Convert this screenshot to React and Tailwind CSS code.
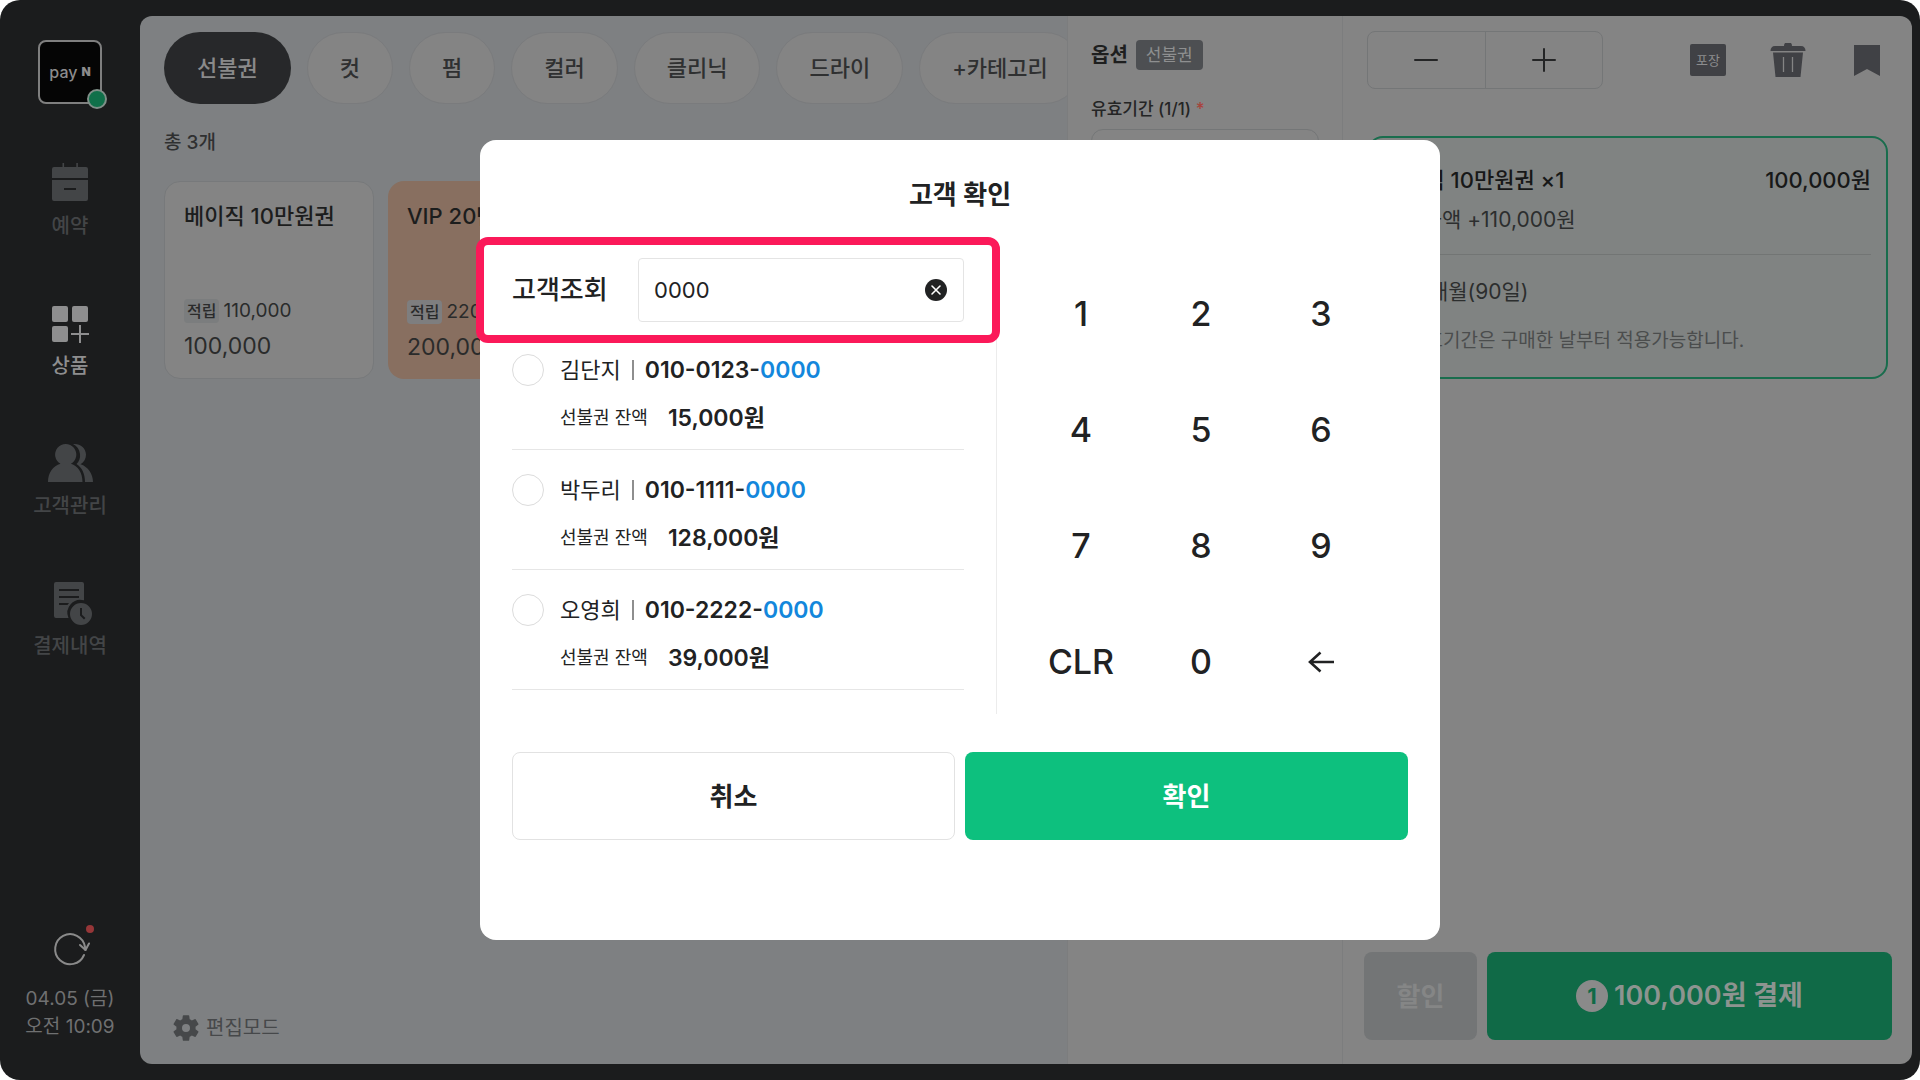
import { useState } from "react";

const CalendarIcon = () => (
  <svg viewBox="0 0 48 48" className="size-12 fill-current" aria-hidden="true">
    <path d="M16.5 4h1.6v4h12.2V4h1.6v4H40a2 2 0 0 1 2 2v9H6v-9a2 2 0 0 1 2-2h8.500z" />
    <path d="M6 21h36v19a2 2 0 0 1-2 2H8a2 2 0 0 1-2-2zM18 29v2h12v-2z" fillRule="evenodd" />
  </svg>
);

const ProductIcon = () => (
  <svg viewBox="0 0 48 48" className="size-12 fill-current" aria-hidden="true">
    <rect x="6" y="7" width="16" height="16" rx="2" />
    <rect x="26" y="7" width="16" height="16" rx="2" />
    <rect x="6" y="27" width="16" height="16" rx="2" />
    <path d="M33 26h2v8h8v2h-8v8h-2v-8h-8v-2h8z" />
  </svg>
);

const CustomersIcon = () => (
  <svg viewBox="0 0 48 48" className="size-12 fill-current" aria-hidden="true">
    <path d="M2 43c0-9 5-16 12.500-18.200a10.600 10.600 0 1 1 10.400 0C32 27 36.500 34 36.500 43z" />
    <path d="M27 5c7-.8 13 4 13 10.500 0 4.200-2 7.700-5.500 9.700C42 27.500 47 35 47 43h-8c0-8-3-14.500-8.500-18 2.700-2.500 4-6 3.500-10-.5-4.500-3-8-7-10z" />
  </svg>
);

const HistoryIcon = () => (
  <svg viewBox="0 0 48 48" className="size-12 fill-current" aria-hidden="true">
    <path
      fillRule="evenodd"
      d="M10 3h26a2 2 0 0 1 2 2v16.300A13 13 0 0 0 22.500 39H10a2 2 0 0 1-2-2V5a2 2 0 0 1 2-2zm3 7v2h20v-2zm0 7v2h20v-2zm0 7v2h8.500l1.500-2z"
    />
    <path fillRule="evenodd" d="M35 24a11 11 0 1 1 0 22 11 11 0 0 1 0-22zm-1 5v7.500l4 4 1.400-1.400-3.400-3.400V29z" />
  </svg>
);

const GearIcon = () => (
  <svg viewBox="0 0 24 24" className="size-8 fill-current" aria-hidden="true">
    <path d="M19.140 12.940c.04-.3.060-.61.060-.94 0-.32-.02-.64-.07-.94l2.030-1.580a.49.49 0 0 0 .12-.61l-1.920-3.320a.488.488 0 0 0-.59-.22l-2.390.96c-.5-.38-1.030-.7-1.620-.94l-.36-2.540a.484.484 0 0 0-.48-.41h-3.840c-.24 0-.43.17-.47.41l-.36 2.540c-.59.24-1.130.57-1.620.94l-2.390-.96c-.22-.08-.47 0-.59.22L2.740 8.870c-.12.21-.08.47.12.61l2.030 1.580c-.05.3-.09.63-.09.94s.02.64.07.94l-2.030 1.580a.49.49 0 0 0-.12.61l1.920 3.320c.12.22.37.29.59.22l2.390-.96c.5.38 1.030.7 1.620.94l.36 2.540c.05.24.24.41.48.41h3.840c.24 0 .44-.17.47-.41l.36-2.540c.59-.24 1.130-.56 1.620-.94l2.390.96c.22.08.47 0 .59-.22l1.920-3.320c.12-.22.07-.47-.12-.61zM12 15a3 3 0 1 1 0-6 3 3 0 0 1 0 6z" />
  </svg>
);

const NAV = [
  { label: "예약", Icon: CalendarIcon },
  { label: "상품", Icon: ProductIcon, active: true },
  { label: "고객관리", Icon: CustomersIcon },
  { label: "결제내역", Icon: HistoryIcon },
];

const CATEGORIES = ["선불권", "컷", "펌", "컬러", "클리닉", "드라이", "+카테고리"];

const PASSES = [
  { name: "베이직 10만원권", bonus: "110,000", price: "100,000" },
  { name: "VIP 20만원권", bonus: "220,000", price: "200,000", vip: true },
];

const CUSTOMERS = [
  { name: "김단지", phone: "010-0123-", balance: "15,000원" },
  { name: "박두리", phone: "010-1111-", balance: "128,000원" },
  { name: "오영희", phone: "010-2222-", balance: "39,000원" },
];

const KEYS = ["1", "2", "3", "4", "5", "6", "7", "8", "9", "CLR", "0", "←"];

function Sidebar() {
  return (
    <aside className="flex w-[140px] shrink-0 flex-col items-center pt-10 pb-[39px]">
      <div className="relative flex size-16 items-center justify-center gap-1 rounded-lg border-2 border-[#7f7f7f] bg-[#050505] text-[#8c8c8c]">
        <span className="text-[16px] leading-6 font-medium">pay</span>
        <span className="text-[12px] leading-6 font-black">N</span>
        <span className="absolute -right-[7px] -bottom-[7px] size-5 rounded-full border-2 border-[#7f8f88] bg-[#10704a]" />
      </div>
      <nav className="mt-[55px] flex flex-col">
        {NAV.map(({ label, Icon, active }) => (
          <a
            key={label}
            href="#"
            className={
              active
                ? "flex h-[140px] flex-col items-center gap-[5px] text-[#8e8e8f]"
                : "flex h-[140px] flex-col items-center gap-[5px] text-[#434547]"
            }
          >
            <Icon />
            <span className="text-[20px] leading-7 font-medium">{label}</span>
          </a>
        ))}
      </nav>
      <div className="mt-auto flex flex-col items-center text-[#6f7071]">
        <button type="button" aria-label="새로고침" className="relative mb-3 size-12">
          <svg viewBox="0 0 48 48" className="size-12" fill="none" stroke="#8a8a8a" strokeWidth="2" strokeLinecap="round" strokeLinejoin="round">
            <path d="M38 30A15 15 0 1 1 39 22l.5 3" />
            <path d="M34 20l5.500 5 3.500-6.500" />
          </svg>
          <span className="absolute top-0 right-0 size-2 rounded-full bg-[#963638]" />
        </button>
        <span className="text-[19px] leading-7">04.05 (금)</span>
        <span className="text-[19px] leading-7">오전 10:09</span>
      </div>
    </aside>
  );
}

function ProductPanel() {
  return (
    <section className="flex min-w-0 flex-1 flex-col overflow-hidden bg-[#7e8082] px-6 py-4">
      <div className="flex gap-4">
        {CATEGORIES.map((c, i) => (
          <button
            key={c}
            type="button"
            className={
              i === 0
                ? "h-[72px] shrink-0 rounded-full bg-[#27282a] px-[33px] text-[22px] leading-8 font-medium text-[#8a8a8a]"
                : "h-[72px] shrink-0 rounded-full border border-[#7a7b7d] bg-[#848484] px-8 text-[22px] leading-8 font-medium text-[#2f3031]"
            }
          >
            {c}
          </button>
        ))}
      </div>
      <p className="mt-[25px] text-[19px] leading-7 font-medium text-[#2f3031]">총 3개</p>
      <div className="mt-6 flex gap-[14px]">
        {PASSES.map((p) => (
          <button
            key={p.name}
            type="button"
            className={
              p.vip
                ? "flex h-[198px] w-[210px] shrink-0 flex-col rounded-2xl bg-[#886f60] px-[19px] pt-[19px] text-left text-[#2a2b2b]"
                : "flex h-[198px] w-[210px] shrink-0 flex-col rounded-2xl border border-[#77797b] bg-[#848484] px-[19px] pt-[18px] text-left text-[#2a2b2b]"
            }
          >
            <span className="text-[22px] leading-8 font-medium whitespace-nowrap text-[#1c1d1d]">{p.name}</span>
            <span className="mt-auto flex items-center gap-1">
              <span className={p.vip ? "rounded bg-[#7e7e7f] px-[3px] text-[16px] leading-6 font-medium" : "rounded bg-[#7b7d7e] px-[3px] text-[16px] leading-6 font-medium"}>
                적립
              </span>
              <span className="text-[19px] leading-6">{p.bonus}</span>
            </span>
            <span className="mt-[7px] mb-4 text-[23px] leading-8">{p.price}</span>
          </button>
        ))}
      </div>
      <button type="button" className="mt-auto flex items-center gap-1 self-start px-1.5 pb-1 text-[#46484a]">
        <GearIcon />
        <span className="text-[20px] leading-8">편집모드</span>
      </button>
    </section>
  );
}

function OptionPanel() {
  return (
    <section className="w-[276px] shrink-0 border-x border-[#7c7d7e] bg-[#848484] px-[23px] pt-6">
      <div className="flex items-center gap-2">
        <h2 className="text-[20px] leading-[30px] font-bold text-[#1e1f1f]">옵션</h2>
        <span className="rounded bg-[#4d4f52] px-[10px] text-[17px] leading-[30px] text-[#8e8f90]">선불권</span>
      </div>
      <p className="mt-6 text-[17px] leading-[30px] font-medium text-[#242525]">
        유효기간 (1/1) <span className="text-[#a8433c]">*</span>
      </p>
      <button type="button" className="mt-[5px] h-16 w-full rounded-xl border border-[#747677] text-[18px] text-[#242525]">
        3개월(90일)
      </button>
    </section>
  );
}

function OrderPanel() {
  return (
    <section className="flex w-[569px] shrink-0 flex-col bg-[#848484] pt-[15px] pr-5 pb-6 pl-[21px]">
      <div className="flex items-center pr-3 pl-[3px] text-[#404145]">
        <div className="flex h-[58px] w-[236px] rounded-lg border border-[#747677] text-[#242526]">
          <button type="button" aria-label="수량 줄이기" className="flex flex-1 items-center justify-center border-r border-[#747677]">
            <svg viewBox="0 0 24 24" className="size-6" fill="none" stroke="currentColor" strokeWidth="2" strokeLinecap="round">
              <path d="M1 12h22" />
            </svg>
          </button>
          <button type="button" aria-label="수량 늘리기" className="flex flex-1 items-center justify-center">
            <svg viewBox="0 0 24 24" className="size-6" fill="none" stroke="currentColor" strokeWidth="2" strokeLinecap="round">
              <path d="M1 12h22M12 1v22" />
            </svg>
          </button>
        </div>
        <div className="ml-auto flex items-center gap-11">
          <button type="button" className="h-8 w-9 rounded-xs bg-[#404145] text-[13px] leading-8 text-[#8c8d8e]">
            포장
          </button>
          <button type="button" aria-label="삭제">
            <svg viewBox="0 0 36 34" className="h-[34px] w-9" aria-hidden="true">
              <path fill="currentColor" d="M14 3a4 4 0 0 1 8 0h9c3 0 4.500 2 4.500 5H.5c0-3 1.500-5 4.500-5zM3 9.500h30L30.500 34h-25z" />
              <path stroke="#848484" strokeWidth="1.300" d="M13.500 14v15M22.500 14v15" />
            </svg>
          </button>
          <button type="button" aria-label="보관" className="pl-1">
            <svg viewBox="0 0 26 31" className="h-[31px] w-[26px]" aria-hidden="true">
              <path fill="currentColor" d="M0 0h26v31l-13-7-13 7z" />
            </svg>
          </button>
        </div>
      </div>

      <div className="mt-[47px] mr-1 ml-[3px] rounded-2xl border-2 border-[#196d4d] bg-[#808382] px-[15px] pt-[26px] pb-5 text-[#2c2e2e]">
        <div className="flex justify-between text-[22px] leading-8 font-medium text-[#171818]">
          <span>베이직 10만원권 ×1</span>
          <span>100,000원</span>
        </div>
        <p className="mt-2 text-[21px] leading-8">적립금액 +110,000원</p>
        <hr className="mt-[18px] border-[#727574]" />
        <p className="mt-[21px] pl-8 text-[21px] leading-8">3개월(90일)</p>
        <p className="mt-[17px] pl-6 text-[19px] leading-8 text-[#4b4d4d]">유효기간은 구매한 날부터 적용가능합니다.</p>
      </div>

      <div className="mt-auto flex gap-2.5">
        <button type="button" className="h-[88px] w-[113px] rounded-lg bg-[#737576] text-[26px] font-bold text-[#858686]">
          할인
        </button>
        <button type="button" className="flex h-[88px] flex-1 items-center justify-center gap-1.5 rounded-lg bg-[#106a47] text-[27px] font-semibold text-[#8d9490]">
          <span className="size-8 rounded-full bg-[#8a8a8a] text-[22px] leading-8 font-bold text-[#106a47]">1</span>
          100,000원 결제
        </button>
      </div>
    </section>
  );
}

function CustomerDialog() {
  const [query, setQuery] = useState("0000");
  const press = (k) => {
    if (k === "CLR") setQuery("");
    else if (k === "←") setQuery(query.slice(0, -1));
    else setQuery(query + k);
  };

  return (
    <div role="dialog" aria-modal="true" aria-labelledby="dialog-title" className="w-[960px] rounded-2xl bg-white px-8 pb-[100px] text-[#212223]">
      <h1 id="dialog-title" className="pt-[39px] pb-[37px] text-center text-[26px] leading-8 font-semibold">
        고객 확인
      </h1>
      <div className="flex items-start">
        <div className="flex-1 border-r border-[#ececec] pt-2.5 pr-8 pb-6">
          <div className="relative flex items-center">
            <label htmlFor="customer-query" className="flex-1 text-[26px] leading-8 font-medium">
              고객조회
            </label>
            <div className="relative">
              <input
                id="customer-query"
                value={query}
                onChange={(e) => setQuery(e.target.value)}
                className="h-16 w-[326px] rounded border border-[#e4e4e4] pr-14 pl-[15px] text-[22px] outline-none"
              />
              <button type="button" aria-label="지우기" onClick={() => setQuery("")} className="absolute top-5 right-4">
                <svg viewBox="0 0 24 24" className="size-6" aria-hidden="true">
                  <circle cx="12" cy="12" r="11" fill="#212223" />
                  <path d="M8 8l8 8M16 8l-8 8" stroke="#fff" strokeWidth="1.600" strokeLinecap="round" />
                </svg>
              </button>
            </div>
            <span className="pointer-events-none absolute -inset-x-9 -inset-y-[21px] rounded-xl border-8 border-[#fb1959]" />
          </div>
          <ul className="mt-2">
            {CUSTOMERS.map((c) => (
              <li key={c.name} className="border-b border-[#e6e6e6] pt-6 pb-[15px]">
                <label className="flex items-start gap-4">
                  <input type="radio" name="customer" className="size-8 appearance-none rounded-full border border-[#dcdcdc] checked:border-[#0dc07e] checked:bg-[#0dc07e]" />
                  <span className="flex flex-col gap-4">
                    <span className="flex items-center text-[22px] leading-8">
                      {c.name}
                      <span className="mx-[11px] h-5 w-0.5 bg-[#8e8e8e]" />
                      <span className="text-[23px] font-semibold">
                        {c.phone}
                        <span className="text-[#1387dc]">0000</span>
                      </span>
                    </span>
                    <span className="flex items-center gap-5 leading-8">
                      <span className="text-[18px]">선불권 잔액</span>
                      <span className="text-[23px] font-semibold">{c.balance}</span>
                    </span>
                  </span>
                </label>
              </li>
            ))}
          </ul>
        </div>
        <div className="grid w-[411px] grid-cols-[repeat(3,120px)] auto-rows-[116px] pt-2 pl-6">
          {KEYS.map((k) => (
            <button key={k} type="button" onClick={() => press(k)} aria-label={k === "←" ? "한 글자 지우기" : k} className="flex items-center justify-center text-[34px] leading-10 font-medium">
              {k === "←" ? (
                <svg viewBox="0 0 26 22" className="h-[22px] w-[26px]" fill="none" stroke="currentColor" strokeWidth="2.600" aria-hidden="true">
                  <path d="M26 11H2M12.500 1.500L2 11l10.500 9.500" />
                </svg>
              ) : (
                k
              )}
            </button>
          ))}
        </div>
      </div>
      <div className="mt-8 grid grid-cols-2 gap-2.5">
        <button type="button" className="h-[88px] rounded-lg border border-[#e2e2e2] text-[26px] font-semibold">
          취소
        </button>
        <button type="button" className="h-[88px] rounded-lg bg-[#0dc07e] text-[26px] font-semibold text-white">
          확인
        </button>
      </div>
    </div>
  );
}

export default function App() {
  return (
    <div className="h-screen bg-white font-['Inter','Noto_Sans_CJK_KR',sans-serif]">
      <div className="flex h-full overflow-hidden rounded-[20px] bg-[#1b1c1d]">
        <Sidebar />
        <main className="my-4 mr-2 flex min-w-0 flex-1 overflow-hidden rounded-xl">
          <ProductPanel />
          <OptionPanel />
          <OrderPanel />
        </main>
      </div>
      <div className="fixed inset-0 flex items-center justify-center">
        <CustomerDialog />
      </div>
    </div>
  );
}
